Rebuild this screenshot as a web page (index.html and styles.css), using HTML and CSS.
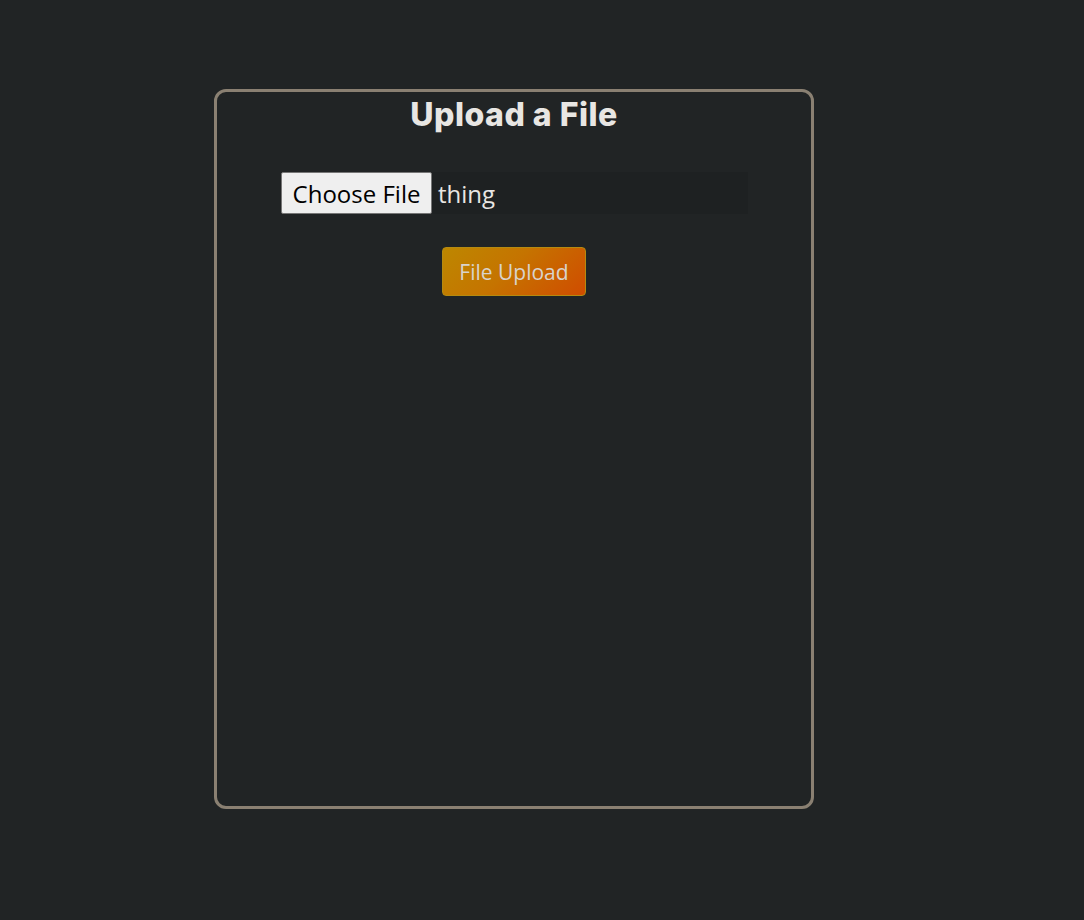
FILE: index.html
```html
<!DOCTYPE html>
<html>
<head>
<meta charset="utf-8">
<link rel="stylesheet" href="styles.css">
</head>
<body>
<div class="card">
  <h1 class="title">Upload a File</h1>
  <form class="form">
    <div class="file-input">
      <span class="choose">Choose File</span>
      <span class="filename">thing</span>
    </div>
    <button type="button" class="upload">File Upload</button>
  </form>
</div>
</body>
</html>
```
FILE: styles.css
```css
html, body {
  margin: 0;
  padding: 0;
  background: #212425;
}
body {
  font-family: "Open Sans", "Noto Sans", sans-serif;
  color: #e8e6e3;
  padding-top: 89px;
  padding-left: 214px;
  height: 920px;
  box-sizing: border-box;
}
.card {
  width: 600px;
  height: 720px;
  box-sizing: border-box;
  border: 3px solid #8a8072;
  border-radius: 12px;
  display: flex;
  flex-direction: column;
  align-items: center;
}
.title {
  margin: 0;
  font-family: "Inter", "Noto Sans", sans-serif;
  font-weight: 800;
  font-size: 32px;
  line-height: 46px;
  letter-spacing: 0.5px;
  color: #e8e6e3;
}
.form {
  display: flex;
  flex-direction: column;
  align-items: center;
  margin-top: 34px;
}
.file-input {
  width: 467px;
  height: 42px;
  background: #1e2122;
  display: flex;
  align-items: center;
  margin-left: 1px;
}
.choose {
  box-sizing: border-box;
  height: 42px;
  width: 151px;
  display: flex;
  align-items: center;
  justify-content: center;
  background: #efefef;
  color: #000;
  border: 1px solid #767676;
  border-radius: 2px;
  font-size: 24px;
}
.filename {
  margin-left: 6px;
  font-size: 24px;
  color: #e8e6e3;
}
.upload {
  margin-top: 33px;
  width: 144px;
  height: 49px;
  border: 1px solid #b58a10;
  border-radius: 4px;
  background: linear-gradient(135deg, #bd8700 0%, #c57400 45%, #d04c00 100%);
  color: #d9d3cc;
  font-family: "Open Sans", "Noto Sans", sans-serif;
  font-size: 21px;
  padding: 0;
}
```
